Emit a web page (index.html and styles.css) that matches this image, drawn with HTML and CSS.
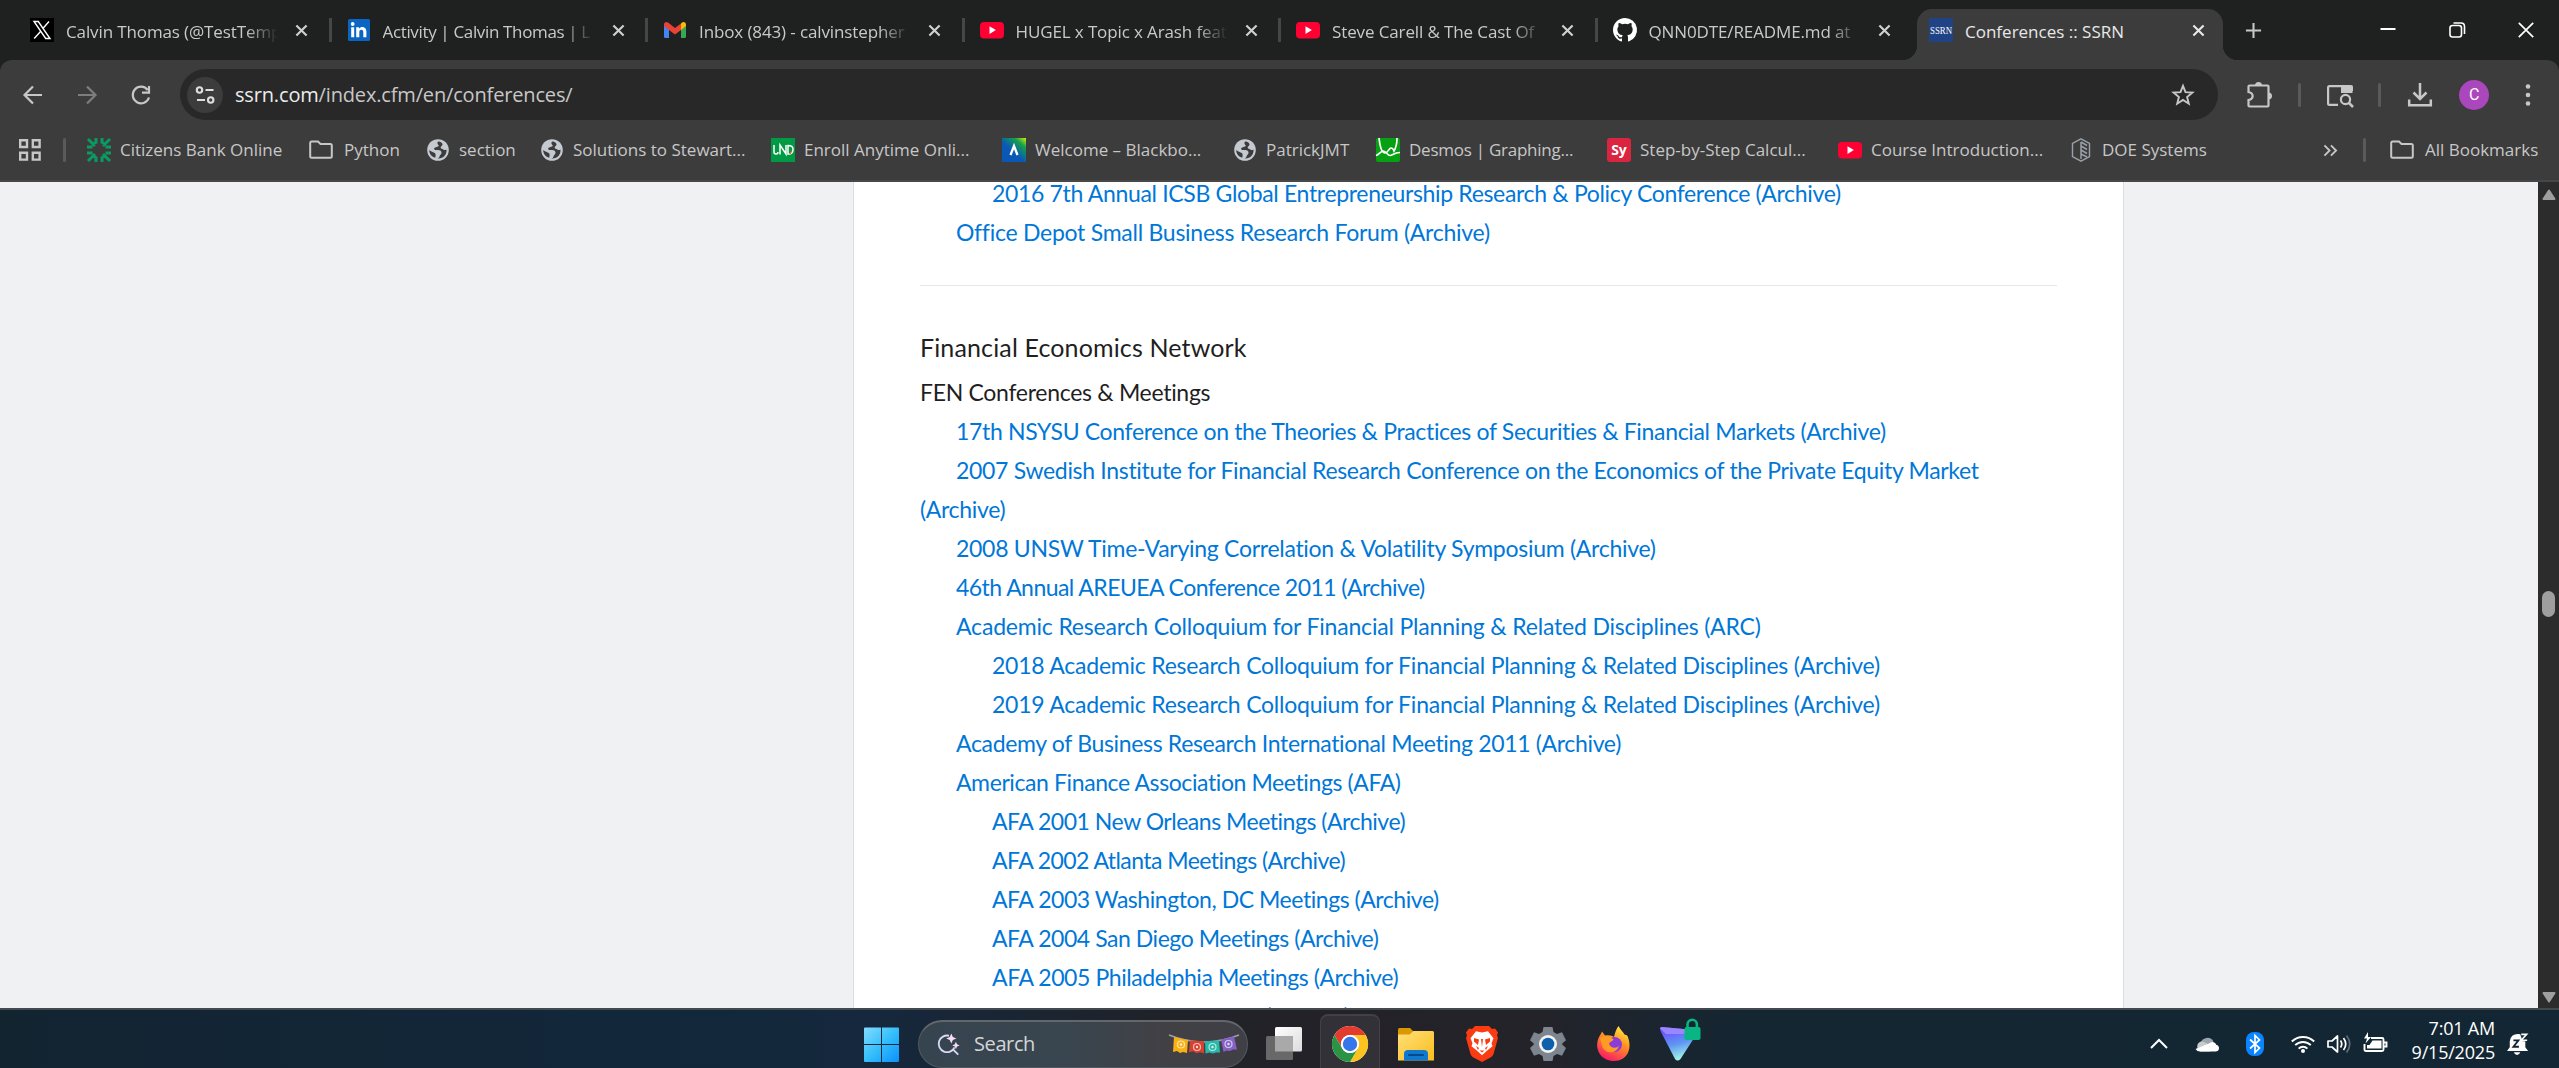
FILE: index.html
```html
<!DOCTYPE html>
<html lang="en">
<head>
<meta charset="utf-8">
<title>Conferences :: SSRN</title>
<link rel="stylesheet" href="styles.css">
</head>
<body>
<svg class="defs" width="0" height="0" aria-hidden="true">
  <symbol id="close" viewBox="0 0 14 14"><path d="M1.5 1.5l11 11M12.5 1.5l-11 11" fill="none" stroke="currentColor" stroke-width="2.3"/></symbol>
  <symbol id="youtube" viewBox="0 0 24 24"><rect y="4" width="24" height="16.5" rx="4" fill="#ff0033"/><path d="M9.5 8.3v7.6l6.4-3.8z" fill="#fff"/></symbol>
  <symbol id="folder" viewBox="0 0 24 24"><path d="M1.2 5v13.3q0 1.5 1.5 1.5h18.6q1.5 0 1.500-1.500V7.500Q22.800 6 21.300 6H11.500L9 3.500H2.700Q1.200 3.500 1.200 5z" fill="none" stroke="#c7c7c7" stroke-width="2"/></symbol>
  <symbol id="globe" viewBox="0 0 24 24"><circle cx="12" cy="12" r="10.800" fill="#c5c9d0"/><path d="M12.500 3.600c-1.800.6-1 2.800 0 3.600 1.200 1-1.600 1.800-3.200 2.200-1.800.5-1.200 2.400.4 2.600 2.200.2 5.400-.2 5.800 2.200.3 2-1.600 2.400-2 4.200-.2 1.300-1.300 1.800-2.200 2 6 .6 9.600-4 9.200-9-.9.800-2.300 1-3.200 0-.8-1-2.300-.5-2.600-1.700-.3-1.400 1.600-1.500 1.800-2.900.2-1.600-1.900-3.200-4-3.200zM3.200 12c1.400 1.500 4.400 2.200 5.600 3 1.400 1 .7 2.700.5 4.800C5.800 18.700 3.200 16 3.200 12z" fill="#3c3c3c"/></symbol>
</svg>

<header class="chrome">
  <div class="tabs">
    <div class="tab"><svg class="ico" viewBox="0 0 24 24"><path d="M0 0h24v24H0z"/><path d="M4 3.500h4.300L20 20.500h-4.300zM19 3.500L13.300 10M10.300 13.800L4.200 20.500" fill="none" stroke="#fff" stroke-width="1.400"/></svg><span class="label">Calvin Thomas (@TestTemp</span><svg class="x"><use href="#close"/></svg></div>
    <div class="tab"><svg class="ico" viewBox="0 0 24 24"><rect x="1" y="1" width="22" height="22" rx="1.500" fill="#0a66c2"/><circle cx="5.700" cy="6" r="1.900" fill="#fff"/><path d="M4.200 9.300h3v9.900h-3zM9.200 9.300H12v1.400c1.800-2.700 7.400-2.200 7.400 2.700v5.800h-3.100v-5.100c0-3-4-3-4 0v5.100H9.200z" fill="#fff"/></svg><span class="label bars">Activity | Calvin Thomas | L</span><svg class="x"><use href="#close"/></svg></div>
    <div class="tab"><svg class="ico" viewBox="0 0 24 24"><path d="M1 7l5 4v9H2.500Q1 20 1 18.500z" fill="#4285f4"/><path d="M23 7l-5 4v9h3.500q1.500 0 1.500-1.500z" fill="#34a853"/><path d="M18 5.500l1-1c1.800-1.300 4-.2 4 2V8l-5 4z" fill="#fbbc04"/><path d="M1 8V6.500c0-2.200 2.200-3.300 4-2l7 5.400 6-4.400V12l-6 4.600L6 12z" fill="#ea4335"/></svg><span class="label">Inbox (843) - calvinstepher</span><svg class="x"><use href="#close"/></svg></div>
    <div class="tab"><svg class="ico"><use href="#youtube"/></svg><span class="label">HUGEL x Topic x Arash feat</span><svg class="x"><use href="#close"/></svg></div>
    <div class="tab"><svg class="ico"><use href="#youtube"/></svg><span class="label">Steve Carell &amp; The Cast Of</span><svg class="x"><use href="#close"/></svg></div>
    <div class="tab last"><svg class="ico" viewBox="0 0 16 16"><path fill="#fff" d="M8 0C3.580 0 0 3.580 0 8c0 3.540 2.290 6.530 5.470 7.590.4.070.55-.17.55-.38 0-.19-.01-.82-.01-1.490-2.010.37-2.530-.49-2.690-.94-.09-.23-.48-.94-.82-1.130-.28-.15-.68-.52-.01-.53.63-.01 1.080.58 1.230.82.72 1.210 1.870.87 2.330.66.07-.52.28-.87.51-1.070-1.780-.2-3.640-.89-3.640-3.950 0-.87.31-1.590.82-2.150-.08-.2-.36-1.020.08-2.120 0 0 .67-.21 2.200.82a7.600 7.600 0 0 1 4 0c1.530-1.040 2.200-.82 2.200-.82.44 1.100.16 1.920.08 2.120.51.56.82 1.270.82 2.150 0 3.070-1.870 3.750-3.650 3.950.29.25.54.73.54 1.480 0 1.070-.01 1.930-.01 2.200 0 .21.15.46.55.38A8 8 0 0 0 8 0z"/></svg><span class="label">QNN0DTE/README.md at</span><svg class="x"><use href="#close"/></svg></div>
    <div class="tab active"><svg class="ico" viewBox="0 0 24 24"><path d="M0 0h24v24H0z" fill="#1f4384"/><text x="12" y="16" text-anchor="middle" textLength="22" lengthAdjust="spacingAndGlyphs" class="ssrn">SSRN</text></svg><span class="label">Conferences :: SSRN</span><svg class="x"><use href="#close"/></svg></div>
    <svg class="plus" viewBox="0 0 18 18"><path d="M9 1v16M1 9h16" stroke="#c7c7c7" stroke-width="2.200"/></svg>
    <div class="window">
      <svg viewBox="0 0 18 18"><path d="M1.500 8h15" stroke="#fff" stroke-width="2"/></svg>
      <svg viewBox="0 0 18 18"><rect x="2" y="4.500" width="11.500" height="11.500" rx="2.500" fill="none" stroke="#fff" stroke-width="1.600"/><path d="M5.500 2h7.500q3.500 0 3.500 3.500v7.500" fill="none" stroke="#fff" stroke-width="1.600"/></svg>
      <svg viewBox="0 0 18 18"><path d="M1.800 1.800l14.400 14.400M16.200 1.800L1.800 16.200" stroke="#fff" stroke-width="1.700"/></svg>
    </div>
  </div>

  <div class="toolbar">
    <nav class="nav">
      <svg viewBox="0 0 24 24"><path d="M21 12H4M12 3.500L3.500 12l8.500 8.500" fill="none" stroke="#c7c7c7" stroke-width="2.200"/></svg>
      <svg viewBox="0 0 24 24"><path d="M3 12h17M12 3.500l8.500 8.500-8.500 8.500" fill="none" stroke="#7d7d7d" stroke-width="2.200"/></svg>
      <svg viewBox="0 0 24 24"><path d="M20 14.500A8.300 8.300 0 1 1 18.700 7M20 3v6.700h-7" fill="none" stroke="#c7c7c7" stroke-width="2.200"/></svg>
    </nav>
    <div class="omnibox">
      <span class="chip"><svg viewBox="0 0 20 20"><g fill="none" stroke="#dedede" stroke-width="2.100"><circle cx="4.500" cy="5" r="2.700"/><path d="M10.500 5h8M2 15h8"/><circle cx="15.700" cy="15" r="2.700"/></g></svg></span>
      <span class="url"><b>ssrn.com</b>/index.cfm/en/conferences/</span>
      <svg class="star" viewBox="0 0 24 24"><path d="M12 2.800l2.500 6.400 6.900.4-5.300 4.400 1.700 6.700-5.800-3.700-5.800 3.700L7.900 14 2.600 9.600l6.900-.4z" fill="none" stroke="#c7c7c7" stroke-width="1.900"/></svg>
    </div>
    <div class="actions">
      <svg viewBox="0 0 26 26"><path d="M2.500 4.500q0-1 1-1h18q1 0 1 1v19q0 1-1 1h-18q-1 0-1-1V18c5.500-1 5.500-7 0-8z" fill="none" stroke="#c7c7c7" stroke-width="2.200"/><path d="M9 3.500a3.500 3.500 0 0 1 7 0zM22.500 10.500a3.500 3.500 0 0 1 0 7z" fill="#c7c7c7"/></svg>
      <i class="sep"></i>
      <svg viewBox="0 0 26 26"><path d="M11 22.800H2.500q-1.400 0-1.400-1.400V5.500q0-1.400 1.400-1.400h21q1.400 0 1.400 1.400V9" fill="none" stroke="#c7c7c7" stroke-width="2.200"/><path d="M14 3.500h11.500V11H14z" fill="#c7c7c7"/><circle cx="18.500" cy="17.500" r="4.600" fill="none" stroke="#c7c7c7" stroke-width="2.200"/><path d="M22 21l4 4" stroke="#c7c7c7" stroke-width="2.500"/></svg>
      <i class="sep"></i>
      <svg viewBox="0 0 26 26"><path d="M13 1v15M6.500 10.500L13 17l6.500-6.500M2.200 17.500v5.800h21.600v-5.800" fill="none" stroke="#c7c7c7" stroke-width="2.500"/></svg>
      <span class="avatar">C</span>
      <svg viewBox="0 0 26 26"><g fill="#c7c7c7"><circle cx="13" cy="4.500" r="2.300"/><circle cx="13" cy="13" r="2.300"/><circle cx="13" cy="21.500" r="2.300"/></g></svg>
    </div>
  </div>

  <div class="bookmarks">
    <svg class="grid" viewBox="0 0 22 22"><g fill="none" stroke="#c7c7c7" stroke-width="2.400"><path d="M1.200 1.200h6.800v6.800H1.200zM13.800 1.200h6.800v6.800h-6.800zM1.200 13.800h6.800v6.800H1.200zM13.800 13.800h6.800v6.800h-6.800z"/></g></svg>
    <i class="sep"></i>
    <div class="items">
      <a><svg viewBox="0 0 24 24"><path d="M9 0v5.500M15 0v5.500M9 18.500V24M15 18.500V24M0 9h5.500M0 15h5.500M18.500 9H24M18.500 15H24M1 1l7 7M23 1l-7 7M1 23l7-7M23 23l-7-7M6 6l3.500-2M18 6l-3.500-2M6 18l3.500 2M18 18l-3.500 2" stroke="#0a9b63" stroke-width="3" fill="none"/></svg>Citizens Bank Online</a>
      <a class="dir"><svg><use href="#folder"/></svg>Python</a>
      <a><svg><use href="#globe"/></svg>section</a>
      <a><svg><use href="#globe"/></svg>Solutions to Stewart...</a>
      <a><svg viewBox="0 0 24 24"><path d="M0 0h24v24H0z" fill="#009a44"/><path d="M3 7v7q0 2 2 2t2-2M9 16.500V7l6 9V7M17 16V7.500q5.500 0 5 4.500t-5 4z" fill="none" stroke="#fff" stroke-width="1.500"/><path d="M18 16l3-4-1 4z" fill="#ff671f"/></svg>Enroll Anytime Onli...</a>
      <a><svg viewBox="0 0 24 24"><defs><linearGradient id="bb" x1="1" y1="0" x2=".3" y2=".8"><stop stop-color="#d4f000"/><stop offset=".3" stop-color="#14a04e"/><stop offset=".75" stop-color="#0b57b5"/></linearGradient></defs><path d="M0 0h24v24H0z" fill="url(#bb)"/><path d="M8.500 17L12 8l3.500 9" fill="none" stroke="#fff" stroke-width="2.300"/></svg>Welcome – Blackbo...</a>
      <a><svg><use href="#globe"/></svg>PatrickJMT</a>
      <a class="bars"><svg viewBox="0 0 24 24"><rect width="24" height="24" rx="2" fill="#06a013"/><path d="M3 0c1 9 3 15 6 15s4-5 6-5 3 3 3 3 3-5 3-13M0 17.500c3-1 5-4.500 7.500-4.500s4 4.500 6.500 4.500 4-3 10-3" fill="none" stroke="#fff" stroke-width="1.700"/></svg>Desmos | Graphing...</a>
      <a><svg viewBox="0 0 24 24"><rect width="24" height="24" rx="3" fill="#db2440"/><text x="12" y="17" text-anchor="middle" class="sy">Sy</text></svg>Step-by-Step Calcul...</a>
      <a><svg><use href="#youtube"/></svg>Course Introduction...</a>
      <a><svg viewBox="0 0 24 24"><path d="M12 .8l8.500 4.700v13L12 23.200l-8.500-4.700v-13z" fill="none" stroke="#9aa0a8" stroke-width="1.400"/><path d="M12 4v17M12 4l6 3.500M12 8l6 3.500M12 12l6 3.500M12 16l6 3" stroke="#9aa0a8" stroke-width="1.500" fill="none"/></svg>DOE Systems</a>
    </div>
    <svg class="more" viewBox="0 0 16 14"><path d="M1.500 1.500L7 7l-5.500 5.500M8.500 1.500L14 7l-5.500 5.500" fill="none" stroke="#c7c7c7" stroke-width="2"/></svg>
    <i class="sep"></i>
    <a class="dir all"><svg><use href="#folder"/></svg>All Bookmarks</a>
  </div>
</header>

<div class="viewport">
  <main class="page">
    <a class="line in2 k34">2016 7th Annual ICSB Global Entrepreneurship Research &amp; Policy Conference (Archive)</a>
    <a class="line in1 k26">Office Depot Small Business Research Forum (Archive)</a>
    <hr>
    <h2>Financial Economics Network</h2>
    <h3 class="line">FEN Conferences &amp; Meetings</h3>
    <a class="line in1 k34">17th NSYSU Conference on the Theories &amp; Practices of Securities &amp; Financial Markets (Archive)</a>
    <a class="line in1 k32">2007 Swedish Institute for Financial Research Conference on the Economics of the Private Equity Market <br>(Archive)</a>
    <a class="line in1 k28">2008 UNSW Time-Varying Correlation &amp; Volatility Symposium (Archive)</a>
    <a class="line in1 k55">46th Annual AREUEA Conference 2011 (Archive)</a>
    <a class="line in1 k18">Academic Research Colloquium for Financial Planning &amp; Related Disciplines (ARC)</a>
    <a class="line in2 k24">2018 Academic Research Colloquium for Financial Planning &amp; Related Disciplines (Archive)</a>
    <a class="line in2 k24">2019 Academic Research Colloquium for Financial Planning &amp; Related Disciplines (Archive)</a>
    <a class="line in1 k34">Academy of Business Research International Meeting 2011 (Archive)</a>
    <a class="line in1 k40">American Finance Association Meetings (AFA)</a>
    <a class="line in2 k48">AFA 2001 New Orleans Meetings (Archive)</a>
    <a class="line in2 k55">AFA 2002 Atlanta Meetings (Archive)</a>
    <a class="line in2 k45">AFA 2003 Washington, DC Meetings (Archive)</a>
    <a class="line in2 k45">AFA 2004 San Diego Meetings (Archive)</a>
    <a class="line in2 k42">AFA 2005 Philadelphia Meetings (Archive)</a>
    <a class="line in2 k45">AFA 2006 Boston Meetings (Archive)</a>
  </main>
  <div class="scrollbar">
    <svg viewBox="0 0 14 12"><path d="M7 1.500L12.500 10h-11z" fill="#9f9f9f" stroke="#9f9f9f" stroke-width="2" stroke-linejoin="round"/></svg>
    <i class="thumb"></i>
    <svg viewBox="0 0 14 12"><path d="M7 10.500L1.500 2h11z" fill="#9f9f9f" stroke="#9f9f9f" stroke-width="2" stroke-linejoin="round"/></svg>
  </div>
</div>

<footer class="taskbar">
  <div class="apps">
    <svg class="start" viewBox="0 0 36 36"><defs><linearGradient id="win" x1="0" y1="0" x2="1" y2="1"><stop stop-color="#83dcff"/><stop offset=".5" stop-color="#35bffb"/><stop offset="1" stop-color="#0a91fb"/></linearGradient></defs><path d="M0 1.500Q0 .5 1 .5h16V17H0zM18 .5h16q1 0 1 1V17H18zM0 18h17v17H1q-1 0-1-1zM18 18h17v16q0 1-1 1H18z" fill="url(#win)"/></svg>
    <div class="search">
      <svg class="lens" viewBox="0 0 26 26"><path d="M13 3A9 9 0 1 0 19 15.500M17 17.500l6 6" fill="none" stroke="#d9d8f6" stroke-width="2"/><path d="M15.500.5l1.700 3.800L21 6l-3.800 1.700-1.700 3.800L13.800 7.700 10 6l3.800-1.700zM20.500 9.500l1.200 2.800 2.800 1.200-2.800 1.200-1.200 2.800-1.200-2.800-2.800-1.200 2.800-1.200z" fill="#f7dcf5"/></svg>
      <span>Search</span>
      <svg class="flags" viewBox="0 0 70 22"><path d="M0 1q35 14 70 0" fill="none" stroke="#9aa0a6" stroke-width="1.500"/><path d="M5 3l14 3-1 13-4-1-3 1-3-2-4 1z" fill="#f9b013"/><path d="M21 6.500l14 .8v12l-4-1-3.500 1-3.500-2-4 1z" fill="#d8412f"/><path d="M36 7.300l14-.8 1 12-4 0-3 1-3.500-1-4 1z" fill="#27b9a9"/><path d="M52 5.500l13-3 3 13-4 0-3 1.500-3.500-.5-3 1.500z" fill="#8561c5"/><g fill="none" stroke="#fff" stroke-opacity=".65" stroke-width="1.200"><circle cx="12" cy="10.500" r="3.500"/><circle cx="28" cy="13" r="3.500"/><circle cx="43.500" cy="13" r="3.500"/><circle cx="59.500" cy="10" r="3.500"/></g><g fill="#fff" fill-opacity=".8"><circle cx="12" cy="10.500" r="1.200"/><circle cx="28" cy="13" r="1.200"/><circle cx="43.500" cy="13" r="1.200"/><circle cx="59.500" cy="10" r="1.200"/></g></svg>
    </div>
    <span class="app"><svg viewBox="0 0 36 36"><defs><linearGradient id="tv" x1="0" y1="0" x2="1" y2="1"><stop stop-color="#fff"/><stop offset="1" stop-color="#dcdcdc"/></linearGradient></defs><rect x="9" y="1" width="27" height="24.500" rx="1.500" fill="url(#tv)"/><rect y="10" width="27" height="24" rx="1.500" fill="#686868"/><path d="M9 10h18v15.500H9z" fill="#a9a9a9"/></svg></span>
    <span class="app current"><svg viewBox="0 0 36 36"><circle cx="18" cy="18" r="18" fill="#fff"/><path d="M2.400 9A18 18 0 0 1 33.600 9H18A9 9 0 0 0 10.200 22.500z" fill="#e33b2e"/><path d="M33.600 9A18 18 0 0 1 18 36l7.800-13.500A9 9 0 0 0 18 9z" fill="#fcc31e"/><path d="M2.400 9A18 18 0 0 0 18 36l7.800-13.500a9 9 0 0 1-15.600 0z" fill="#2a9344"/><circle cx="18" cy="18" r="9" fill="#fff"/><circle cx="18" cy="18" r="7.200" fill="#3576ea"/></svg></span>
    <span class="app"><svg viewBox="0 0 36 36"><defs><linearGradient id="fe" x1="0" y1="0" x2="1" y2="1"><stop stop-color="#ffe07a"/><stop offset="1" stop-color="#fbbd1d"/></linearGradient></defs><path d="M0 3.500Q0 2 1.500 2H12l4 4v7H0z" fill="#dc9800"/><path d="M0 8.500h11.500L15.500 5H34.500Q36 5 36 6.500v28H0z" fill="url(#fe)"/><path d="M6 34.500V28q0-4 4-4h16q4 0 4 4v6.500z" fill="#0f78cf"/><path d="M11 29h14" stroke="#08498a" stroke-width="2" stroke-linecap="round"/></svg></span>
    <span class="app"><svg viewBox="0 0 36 36"><path d="M11 0h14l3 3 3-.5 3 4-1 3 1 2.500-4.500 16q-.6 2-2.500 3.300L18 36l-9-4.700Q7 30 6.500 28L2 12l1-2.500-1-3 3-4 3 .5z" fill="#fb3b12"/><path d="M18 6.500l6-1.200 5.500 7-2 5 1 3-5 4-5.500 5-5.500-5-5-4 1-3-2-5 5.500-7z" fill="#fff"/><path d="M10 12l5 1.500-1 5.500-4-3.500zM26 12l-5 1.500 1 5.500 4-3.500zM12 20l3 2-1 2zM24 20l-3 2 1 2zM15.500 24.500h5L18 26.500zM17 13l1 8 1-8z" fill="#fb3b12"/></svg></span>
    <span class="app"><svg viewBox="0 0 36 36"><path d="M13.500 1h9l1 5 3.500 2 5-1.800 4 8-3.800 3.300v1L36 22l-4 7.800-5-1.800-3.500 2-1 5h-9l-1-5L9 28l-5 1.800L0 22l3.800-3.500v-1L0 14.200l4-8L9 8l3.500-2z" fill="#7d868f"/><circle cx="18" cy="18" r="9" fill="#f1f3f5"/><circle cx="18" cy="18" r="6.300" fill="#0f5fab"/></svg></span>
    <span class="app"><svg viewBox="0 0 36 36"><defs><linearGradient id="ff" x1=".8" y1="0" x2=".3" y2="1"><stop stop-color="#fff04a"/><stop offset=".4" stop-color="#ff9820"/><stop offset="1" stop-color="#f9166a"/></linearGradient></defs><path d="M22.500 0c2 4 4 5 6 8.500 1 .2 2 .5 3 1.500C37 23 31 35 18 35 6 35-1.500 25 2 13.500 3 10.500 5 8 6 5.500l3 4c4-.8 7 0 9 1.500 1-4 2-8 4.500-11z" fill="url(#ff)"/><circle cx="18.500" cy="18.500" r="7.500" fill="#8b3bd8"/><path d="M4 11.500c5-2.500 10-1.500 13.500 2-1 2-3.500 2-4.500 4 1 5 8 5.500 10 2-2 9-14 9-17 .5z" fill="#ff9a22"/></svg></span>
    <span class="app"><svg class="vpn" viewBox="0 0 42 44"><defs><linearGradient id="pv" x1=".3" y1="0" x2=".6" y2="1"><stop stop-color="#6d4aff"/><stop offset=".5" stop-color="#5f95f2"/><stop offset="1" stop-color="#a9ffe6"/></linearGradient></defs><path d="M1 10.500Q1 9 3 9l32 3q4 1 2 5L21.500 41q-3 3-5.500 0L1.500 13z" fill="url(#pv)"/><path d="M1 10.500Q1 9 3 9l32 3 2 4L7 16z" fill="#9a86ff"/><path d="M28.500 10V6.500a4.700 4.700 0 0 1 9.400 0V10" fill="none" stroke="#08b583" stroke-width="2.600"/><rect x="25.500" y="9" width="16" height="13" rx="2" fill="#08b583"/></svg></span>
  </div>
  <div class="tray">
    <svg viewBox="0 0 24 24"><path d="M4 16l8-8 8 8" fill="none" stroke="#fff" stroke-width="2"/></svg>
    <svg viewBox="0 0 24 24"><path d="M5.500 11.500a7 7 0 0 1 13-2l-8 6z" fill="#9ea5ab"/><path d="M5.500 19.500a5.400 5.400 0 0 1-.3-9.800q2.300-.6 5 .8l8 4.500-3 4.500z" fill="#c7cbce"/><path d="M5 19.500q-3 0-4.500-2.500L14 11.500q1.500-1.700 4-1.500 2.600.4 3.300 2.800 2.700.5 2.700 3.500-.3 3.200-3.500 3.200z" fill="#fff"/></svg>
    <svg viewBox="0 0 24 24"><rect x="3" width="18" height="24" rx="8" fill="#0a84ff"/><path d="M7 7.500l9.500 8.500L12 20.500v-17L16.500 8 7 16.500" fill="none" stroke="#fff" stroke-width="1.700"/></svg>
    <svg viewBox="0 0 24 24"><g fill="none" stroke="#fff" stroke-width="1.900"><path d="M.8 9.500a16 16 0 0 1 22.400 0M4.200 13.200a11 11 0 0 1 15.600 0M7.600 16.600a6.200 6.200 0 0 1 8.800 0"/></g><circle cx="12" cy="19" r="2" fill="#fff"/></svg>
    <svg viewBox="0 0 24 24"><path d="M1 9h4l5.500-5v16L5 15H1z" fill="none" stroke="#fff" stroke-width="1.700" stroke-linejoin="round"/><path d="M13.500 8.500q2.500 3.500 0 7M16.500 6q4.500 6 0 12" fill="none" stroke="#fff" stroke-width="1.700"/><path d="M19.500 3.500q6.500 8.500 0 17" fill="none" stroke="#5d6b76" stroke-width="1.700"/></svg>
    <svg viewBox="0 0 24 24"><path d="M8 6h11q1.500 0 1.500 1.500v10q0 1.500-1.500 1.500H3q-1.500 0-1.500-1.500V12M21 10.500h2.500v4H21" fill="none" stroke="#fff" stroke-width="1.900"/><path d="M9.500 8.500h9v8H4V13h2.500z" fill="#fff"/><path d="M5 0L1 6.500h3L2.500 11.500 8 5H5z" fill="#fff"/></svg>
    <div class="clock">7:01 AM<br>9/15/2025</div>
    <svg class="bell" viewBox="0 0 24 24"><path d="M0 19.500l3-4V9q1-8 9-8 3 0 5 1.500l3 6v7l3 4z" fill="#fff"/><path d="M7.500 21h7q-1 3-3.500 3t-3.500-3z" fill="#fff"/><path d="M14 0h10v9h-7z" fill="#122531"/><path d="M7 8h5.500l-5.500 7h6" fill="none" stroke="#122531" stroke-width="2"/><path d="M15.500 1.500h6l-6 6.500H22" fill="none" stroke="#fff" stroke-width="1.700"/></svg>
  </div>
</footer>
</body>
</html>
```
FILE: styles.css
```css
* { box-sizing: border-box; }

body {
  margin: 0;
  width: 2559px;
  height: 1068px;
  overflow: hidden;
  display: flex;
  flex-direction: column;
  font-family: "Open Sans", "Noto Sans", sans-serif;
  font-size: 17px;
  background: #1f2120;
}

svg { display: block; flex: none; overflow: visible; }
.defs { position: absolute; }

/* Browser chrome */
.chrome { height: 182px; flex: none; border-bottom: 2px solid #474747; background: #3c3c3c; }

.tabs {
  height: 72px;
  margin-bottom: -12px;
  padding-left: 15px;
  display: flex;
  background: #1f2120;
}
.tab {
  width: 316.5px;
  height: 60px;
  flex: none;
  padding: 0 23.500px 0 15px;
  display: flex;
  align-items: center;
  color: #c9c9c9;
  background: linear-gradient(#464646, #464646) 100% 50% / 3px 24px no-repeat;
}
.tab.last { background: none; }
.ico { width: 24px; height: 24px; }
.label {
  margin: 3px 15px 0 12px;
  width: 215px;
  overflow: hidden;
  white-space: nowrap;
  line-height: 24px;
  letter-spacing: -.12px;
  mask-image: linear-gradient(90deg, #000 84%, transparent 99%);
}
.tab .bars { letter-spacing: -.35px; }
.x { width: 13px; height: 13px; color: #d0d0d0; margin-left: auto; }
.tab.active {
  position: relative;
  width: 306px;
  height: 51px;
  margin: 9px 0 0 3px;
  padding: 0 18px 9px 12px;
  border-radius: 15px 15px 0 0;
  background: #3c3c3c;
  color: #e8e8e8;
}
.tab.active .label { mask-image: none; letter-spacing: 0; }
.tab.active .x { color: #e8e8e8; }
.tab.active::before, .tab.active::after {
  content: "";
  position: absolute;
  bottom: 0;
  width: 15px;
  height: 15px;
}
.tab.active::before { left: -15px; background: radial-gradient(circle at 0 0, transparent 15px, #3c3c3c 15.500px); }
.tab.active::after { right: -15px; background: radial-gradient(circle at 100% 0, transparent 15px, #3c3c3c 15.500px); }
.ssrn { font: 11px "Liberation Serif", serif; fill: #fff; }
.sy { font: 700 14px "Open Sans", sans-serif; fill: #fff; }
.plus { width: 17px; height: 17px; margin: 21.500px 0 0 22px; }
.window { margin: 21px 24px 0 auto; display: flex; gap: 51px; }
.window svg { width: 18px; height: 18px; }

.toolbar {
  position: relative;
  height: 69px;
  padding: 9px 19px 9px 21px;
  display: flex;
  align-items: center;
  background: #3c3c3c;
  border-radius: 12px 12px 0 0;
}
.nav { width: 159px; display: flex; gap: 30px; }
.nav svg { width: 24px; height: 24px; }
.omnibox {
  width: 2038px;
  height: 51px;
  flex: none;
  padding: 0 23px 0 7px;
  display: flex;
  align-items: center;
  border-radius: 26px;
  background: #282828;
}
.chip { width: 36px; height: 36px; border-radius: 50%; background: #3c3c3c; display: grid; place-items: center; }
.chip svg { width: 20px; height: 20px; }
.url { margin-left: 12px; font-size: 20px; letter-spacing: -.16px; line-height: 28px; color: #c7c7c7; }
.url b { font-weight: 400; color: #ececec; }
.star { width: 24px; height: 24px; margin-left: auto; }
.actions { flex: 1; padding-left: 28px; display: flex; align-items: center; justify-content: space-between; }
.actions svg { width: 26px; height: 26px; }
.actions svg:last-child { margin-right: -1px; }
.sep { width: 3px; height: 24px; border-radius: 2px; background: #5a5a5a; flex: none; }
.avatar {
  width: 30px;
  height: 30px;
  border-radius: 50%;
  background: #ab47bc;
  color: #fff;
  font: 16px/30px Roboto, sans-serif;
  text-align: center;
}

.bookmarks { position: relative; height: 42px; padding: 0 21px 0 19px; display: flex; align-items: center; color: #c7c7c7; background: #3c3c3c; }
.grid { width: 22px; height: 22px; margin-right: 22px; }
.items {
  width: 2257px;
  flex: none;
  padding-left: 21px;
  display: grid;
  grid-template-columns: 222px 117px 114px 231px 231px 231px 143px 231px 231px 231px 231px;
}
.bookmarks a { display: flex; align-items: center; gap: 9px; white-space: nowrap; line-height: 24px; }
.bookmarks a svg { width: 24px; height: 24px; }
.bookmarks .dir { gap: 11px; }
.bookmarks .bars { letter-spacing: -.25px; }
.more { width: 15px; height: 13px; }
.more + .sep { margin-left: 25px; }
.bookmarks .all { margin-left: 24px; }

/* Page */
.viewport { height: 826px; flex: none; display: flex; background: #eff1f3; overflow: hidden; }
.page {
  width: 1271px;
  margin: 0 414px 0 853px;
  padding: 0 66px;
  flex: none;
  border: 1px solid #d9dce3;
  border-width: 0 1px;
  background: #fff;
  font-family: Lato, "Noto Sans", sans-serif;
}
.line {
  display: block;
  margin: 0;
  font-size: 23px;
  font-weight: 400;
  line-height: 39px;
  white-space: nowrap;
  color: #0077d8;
}
.line:first-child { margin-top: -8px; }
h3.line { color: #1f1f1f; letter-spacing: -.3px; }
.in1 { text-indent: 36px; }
.in2 { text-indent: 72px; }
.k18 { letter-spacing: -.18px; }
.k24 { letter-spacing: -.23px; }
.k26 { letter-spacing: -.26px; }
.k28 { letter-spacing: -.28px; }
.k32 { letter-spacing: -.32px; }
.k34 { letter-spacing: -.335px; }
.k40 { letter-spacing: -.4px; }
.k42 { letter-spacing: -.42px; }
.k45 { letter-spacing: -.45px; }
.k48 { letter-spacing: -.48px; }
.k55 { letter-spacing: -.55px; }
hr { margin: 33px 0 42px; border: 0; border-top: 1px solid #e6e7e8; }
h2 { margin: 0 0 6px; font-size: 25px; font-weight: 400; line-height: 39px; letter-spacing: .14px; color: #1f1f1f; }

.scrollbar {
  width: 21px;
  padding: 7px 0 5px;
  display: flex;
  flex-direction: column;
  align-items: center;
  background: #2c2c2c;
}
.scrollbar svg { width: 14px; height: 12px; }
.thumb { width: 13px; height: 26px; margin: 390px 0 auto; border-radius: 7px; background: #9f9f9f; }

/* Taskbar */
.taskbar {
  height: 60px;
  flex: none;
  display: flex;
  justify-content: space-between;
  border-top: 2px solid #424a50;
  background: linear-gradient(90deg, #132431 0, #12273a 25%, #15283d 34%, #1f2229 45%, #242228 52%, #24232a 60%, #142632 68%, #122633 100%);
}
.apps { padding-left: 864px; display: flex; }
.start { width: 36px; height: 36px; margin-top: 17px; }
.search {
  width: 330px;
  height: 48px;
  margin: 10px 3px 0 18px;
  padding: 0 8px 0 18px;
  display: flex;
  align-items: center;
  border: 1px solid #515960;
  border-top: 2px solid #62676c;
  border-radius: 24px;
  background: linear-gradient(90deg, #36444f, #39454f 45%, #414045 75%, #3f3f45);
  color: #d3d6d8;
  font-size: 20px;
}
.lens { width: 24px; height: 24px; }
.search span { margin: -2px 0 0 13px; letter-spacing: -.4px; }
.flags { width: 70px; height: 22px; margin-left: auto; }
.app { width: 60px; height: 58px; margin: 0 3px; padding: 16px 12px 0; flex: none; }
.app svg { width: 36px; height: 36px; }
.app.current { margin-top: 4px; height: 54px; padding: 10px 11px 0; border: 1px solid #424147; border-width: 2px 1px 0; border-radius: 8px 8px 0 0; background: #323138; }
.app .vpn { width: 42px; height: 44px; margin: -8px 0 0 -6px; }
.app:last-child { padding-left: 15px; }

.tray { width: 412px; padding-top: 5px; display: flex; }
.tray svg { width: 24px; height: 24px; margin-top: 17px; }
.tray svg:nth-child(2) { margin-left: 24px; }
.tray svg:nth-child(3) { margin-left: 24px; }
.tray svg:nth-child(4) { margin-left: 24px; }
.tray svg:nth-child(5), .tray svg:nth-child(6) { margin-left: 12px; }
.clock { width: 108px; margin-top: 1px; text-align: right; font-size: 18px; line-height: 24px; letter-spacing: -.2px; color: #fff; }
.tray .bell { width: 22px; margin-left: 12px; }
```
